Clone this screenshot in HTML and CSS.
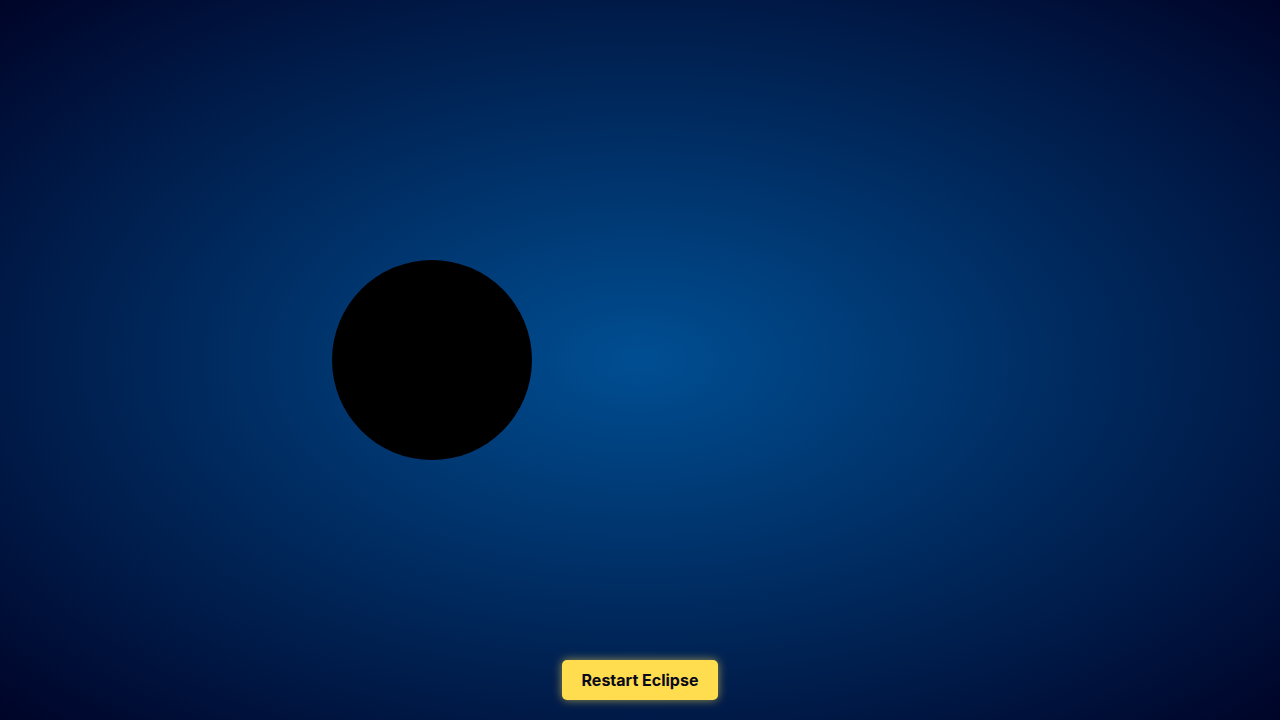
FILE: index.html
```html
<!DOCTYPE html>
<html lang="en">
<head>
<meta charset="utf-8">
<title>Eclipse</title>
<link rel="stylesheet" href="styles.css">
</head>
<body>
<main class="sky">
  <div class="stage">
    <div class="moon"></div>
  </div>
  <div class="controls">
    <button class="restart" type="button">Restart Eclipse</button>
  </div>
</main>
</body>
</html>
```
FILE: styles.css
```css
html, body {
  margin: 0;
  padding: 0;
  height: 100%;
}
body {
  font-family: Inter, "Liberation Sans", sans-serif;
  overflow: hidden;
}
.sky {
  height: 720px;
  width: 100%;
  display: flex;
  flex-direction: column;
  background: radial-gradient(ellipse at 50% 50%, #004e92 0%, #000428 100%);
}
.stage {
  flex: 1;
  position: relative;
}
.moon {
  position: absolute;
  left: 332px;
  top: 260px;
  width: 200px;
  height: 200px;
  border-radius: 50%;
  background: #000;
}
.controls {
  display: flex;
  justify-content: center;
  padding-bottom: 20px;
}
.restart {
  font-family: Inter, "Liberation Sans", sans-serif;
  font-size: 16px;
  font-weight: 700;
  color: #0a0a1a;
  background: #ffdd4f;
  border: none;
  border-radius: 5px;
  height: 40px;
  padding: 0 20px;
  box-shadow: 0 0 10px rgba(255, 221, 79, 0.6);
  cursor: pointer;
}
```
